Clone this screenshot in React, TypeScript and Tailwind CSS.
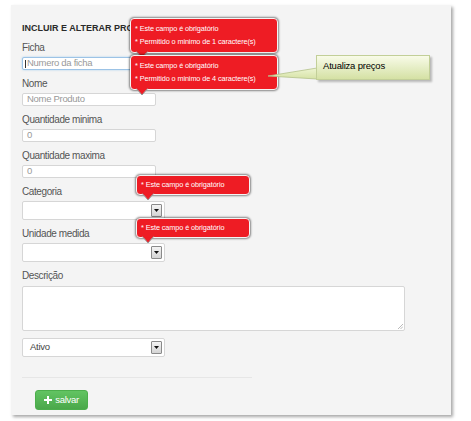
const font = { fontFamily: '"Liberation Sans", Arial, sans-serif' };

const Field = ({ label, children, gap = 'gap-[3px]' }: { label: string; children: React.ReactNode; gap?: string }) => (
  <div className={`flex flex-col ${gap}`}>
    <div className="h-[12px] leading-[12px] text-[10px] tracking-[-0.4px] text-[#555]">{label}</div>
    {children}
  </div>
);

const TextInput = ({ placeholder, focused }: { placeholder: string; focused?: boolean }) => (
  <div
    className={`relative w-[134px] h-[13px] bg-white rounded-[2px] border flex items-center pl-[4px] text-[9.5px] tracking-[-0.3px] text-[#999] ${
      focused ? 'border-[#9cc3e6] shadow-[0_0_2px_rgba(82,168,236,0.5)]' : 'border-[#d6d6d6]'
    }`}>
    {focused && <span className="absolute left-[2px] top-[2px] w-px h-[8px] bg-[#333]" />}
    {placeholder}
  </div>
);

const Select = ({ value }: { value?: string }) => (
  <div className="w-[143px] h-[19px] bg-white rounded-[2px] border border-[#d6d6d6] flex items-center justify-between pl-[7px] pr-[2px] text-[9.5px] tracking-[-0.3px] text-[#444]">
    <span>{value}</span>
    <span className="w-[11px] h-[13px] border border-[#8a8a8a] rounded-[1px] bg-gradient-to-b from-[#f4f4f4] to-[#d4d4d4] flex items-center justify-center">
      <svg width="5" height="3" viewBox="0 0 5 3">
        <polygon points="0,0 5,0 2.5,3" fill="#111" />
      </svg>
    </span>
  </div>
);

const ErrorTip = ({ lines, className }: { lines: string[]; className: string }) => (
  <div className={`absolute ${className}`}>
    <div
      className={`relative bg-[#ee1c24] rounded-[4px] border border-[#f4f4f4] shadow-[0_0_2px_1px_rgba(0,0,0,0.45)] px-[4px] flex flex-col gap-[3px] text-white text-[7.3px] leading-[10px] tracking-[-0.1px] ${
        lines.length > 1 ? 'py-[5px]' : 'py-[4px]'
      }`}>
      {lines.map((l) => (
        <div key={l}>* {l}</div>
      ))}
    </div>
    <svg className="absolute left-[5px] -bottom-[6px]" width="14" height="8" viewBox="0 0 14 8">
      <polygon points="1,0 13,0 7,7" fill="#ee1c24" stroke="#9a9a9a" strokeWidth="1" />
      <rect x="1.5" y="0" width="11" height="1.2" fill="#ee1c24" />
    </svg>
  </div>
);

export default function App() {
  return (
    <div className="relative w-[471px] h-[421px] bg-white overflow-hidden pl-[11px] pt-[5px]" style={font}>
      <div className="w-[440px] h-[410px] bg-[#f4f4f4] shadow-[2px_2px_3px_rgba(0,0,0,0.35)] pl-[11px] pt-[17px] flex flex-col gap-[8px]">
        <div className="h-[12px] leading-[12px] text-[9px] font-bold text-[#2a2a2a]">INCLUIR E ALTERAR PRODUTO</div>

        <Field label="Ficha">
          <TextInput placeholder="Numero da ficha" focused />
        </Field>
        <Field label="Nome">
          <TextInput placeholder="Nome Produto" />
        </Field>
        <Field label="Quantidade minima">
          <TextInput placeholder="0" />
        </Field>
        <Field label="Quantidade maxima">
          <TextInput placeholder="0" />
        </Field>
        <Field label="Categoria">
          <Select />
        </Field>
        <Field label="Unidade medida">
          <Select />
        </Field>
        <Field label="Descrição" gap="gap-[4px]">
          <div className="relative w-[383px] h-[45px] bg-white rounded-[2px] border border-[#d6d6d6]">
            <svg className="absolute right-[1px] bottom-[1px]" width="5" height="5" viewBox="0 0 5 5">
              <line x1="0" y1="5" x2="5" y2="0" stroke="#aaa" strokeWidth="0.8" />
              <line x1="2.5" y1="5" x2="5" y2="2.5" stroke="#aaa" strokeWidth="0.8" />
            </svg>
          </div>
        </Field>

        <div className="-mt-[1px]">
          <Select value="Ativo" />
        </div>

        <div className="mt-[12px] w-[230px] h-px bg-[#e6e6e6]" />

        <div className="mt-[4px] pl-[13px]">
          <button
            type="button"
            className="w-[53px] h-[20px] rounded-[3px] border border-[#4cae4c] bg-gradient-to-b from-[#62c462] to-[#4aa84a] text-white text-[9.5px] tracking-[-0.3px] flex items-center justify-center gap-[3px]">
            <svg width="8" height="8" viewBox="0 0 8 8">
              <path d="M3 0h2v3h3v2H5v3H3V5H0V3h3z" fill="#fff" />
            </svg>
            salvar
          </button>
        </div>
      </div>

      <ErrorTip className="left-[130px] top-[18px] w-[148px]" lines={['Este campo é obrigatório', 'Permitido o minimo de 1 caractere(s)']} />
      <ErrorTip className="left-[130px] top-[55px] w-[148px]" lines={['Este campo é obrigatório', 'Permitido o minimo de 4 caractere(s)']} />
      <ErrorTip className="left-[136px] top-[175px] w-[114px]" lines={['Este campo é obrigatório']} />
      <ErrorTip className="left-[136px] top-[218px] w-[114px]" lines={['Este campo é obrigatório']} />

      <svg className="absolute left-[266px] top-[66px]" width="52" height="14" viewBox="0 0 52 14">
        <defs>
          <linearGradient id="wedge" x1="0" y1="0" x2="0" y2="1">
            <stop offset="0" stopColor="#eef5d2" />
            <stop offset="1" stopColor="#d6e2a6" />
          </linearGradient>
        </defs>
        <polygon points="2,10 51,2 51,13" fill="url(#wedge)" stroke="#b4c28a" strokeWidth="0.8" />
      </svg>
      <div className="absolute left-[316px] top-[55px] w-[114px] h-[25px] border border-[#c2cf98] bg-gradient-to-b from-[#f8fbe8] to-[#d5e1a4] shadow-[2px_2px_2px_rgba(0,0,0,0.25)] pl-[6px] pt-[3px] text-[9.5px] tracking-[-0.2px] text-black">
        Atualiza preços
      </div>
    </div>
  );
}
